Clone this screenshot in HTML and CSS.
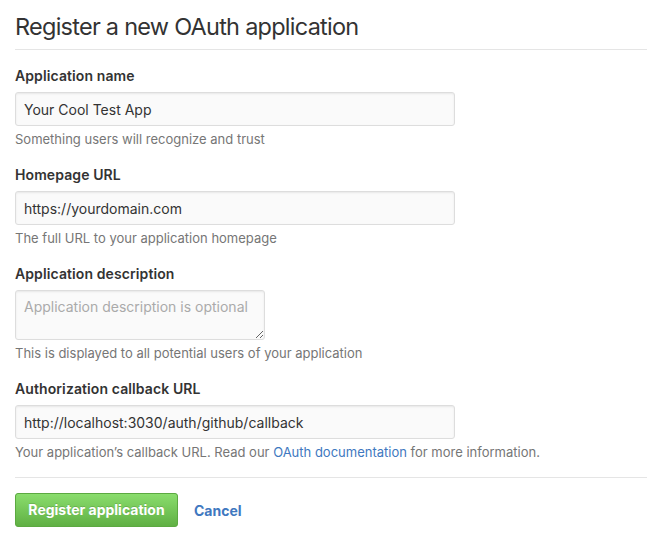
FILE: index.html
```html
<!DOCTYPE html>
<html>
<head>
<meta charset="utf-8">
<link rel="stylesheet" href="styles.css">
</head>
<body>
<div class="page">
  <div class="subhead">
    <h2 class="subhead-title">Register a new OAuth application</h2>
  </div>
  <form class="form">
    <dl class="form-group">
      <dt><label>Application name</label></dt>
      <dd><input class="form-control wide" type="text" value="Your Cool Test App"></dd>
      <dd class="note">Something users will recognize and trust</dd>
    </dl>
    <dl class="form-group">
      <dt><label>Homepage URL</label></dt>
      <dd><input class="form-control wide" type="text" value="https://yourdomain.com"></dd>
      <dd class="note">The full URL to your application homepage</dd>
    </dl>
    <dl class="form-group">
      <dt><label>Application description</label></dt>
      <dd><textarea class="form-control short" placeholder="Application description is optional"></textarea></dd>
      <dd class="note">This is displayed to all potential users of your application</dd>
    </dl>
    <dl class="form-group">
      <dt><label>Authorization callback URL</label></dt>
      <dd><input class="form-control wide" type="text" value="http://localhost:3030/auth/github/callback"></dd>
      <dd class="note">Your application’s callback URL. Read our <a href="#">OAuth documentation</a> for more information.</dd>
    </dl>
    <hr class="divider">
    <div class="actions">
      <button type="button" class="btn-primary">Register application</button>
      <a class="cancel" href="#">Cancel</a>
    </div>
  </form>
</div>
</body>
</html>
```

FILE: styles.css
```css
html, body {
  margin: 0;
  padding: 0;
  background: #fff;
}
body {
  font-family: Inter, "Liberation Sans", Arial, sans-serif;
  font-size: 14px;
  color: #333;
}
.page {
  padding-left: 15px;
}
.subhead {
  margin-top: 12px;
  padding-bottom: 7px;
  border-bottom: 1px solid #e5e5e5;
}
.subhead-title {
  margin: 0;
  font-size: 23.5px;
  line-height: 30px;
  font-weight: normal;
  color: #333;
  letter-spacing: -0.75px;
}
.form {
  padding-top: 16px;
  margin: 0;
}
.form-group {
  margin: 0 0 17px 0;
}
.form-group dt {
  margin: 0 0 6px 0;
}
.form-group dt label {
  font-weight: 600;
  font-size: 14px;
  line-height: 20px;
  letter-spacing: 0.1px;
  display: block;
}
.form-group dd {
  margin: 0;
}
.form-control {
  box-sizing: border-box;
  display: block;
  font-family: Inter, "Liberation Sans", Arial, sans-serif;
  font-size: 14px;
  color: #333;
  padding: 7px 8px;
  background: #fafafa;
  border: 1px solid #ddd;
  border-radius: 3px;
  box-shadow: inset 0 1px 2px rgba(0,0,0,0.075);
  outline: none;
  margin: 0;
}
.wide {
  width: 440px;
  height: 34px;
}
.short {
  width: 250px;
  height: 50px;
  resize: vertical;
  line-height: 20px;
  padding: 6px 8px;
}
.short::placeholder {
  color: #aaa;
}
.note {
  margin-top: 4px !important;
  font-size: 13px;
  line-height: 18px;
  color: #767676;
}
.note a {
  color: #4078c0;
  text-decoration: none;
}
.divider {
  margin: 0;
  margin-top: -1px;
  border: 0;
  border-top: 1px solid #e5e5e5;
  height: 0;
}
.actions {
  display: flex;
  align-items: center;
  margin-top: 15px;
}
.btn-primary {
  font-family: Inter, "Liberation Sans", Arial, sans-serif;
  font-size: 14px;
  font-weight: 700;
  line-height: 20px;
  color: #fff;
  padding: 6px 0;
  height: 34px;
  width: 163px;
  border: 1px solid #5ca941;
  border-radius: 3px;
  background-color: #60b044;
  background-image: linear-gradient(#8add6d, #60b044);
  text-shadow: 0 -1px 0 rgba(0,0,0,0.15);
  cursor: pointer;
}
.cancel {
  margin-left: 16px;
  font-weight: 700;
  color: #4078c0;
  text-decoration: none;
  font-size: 14px;
}
```
